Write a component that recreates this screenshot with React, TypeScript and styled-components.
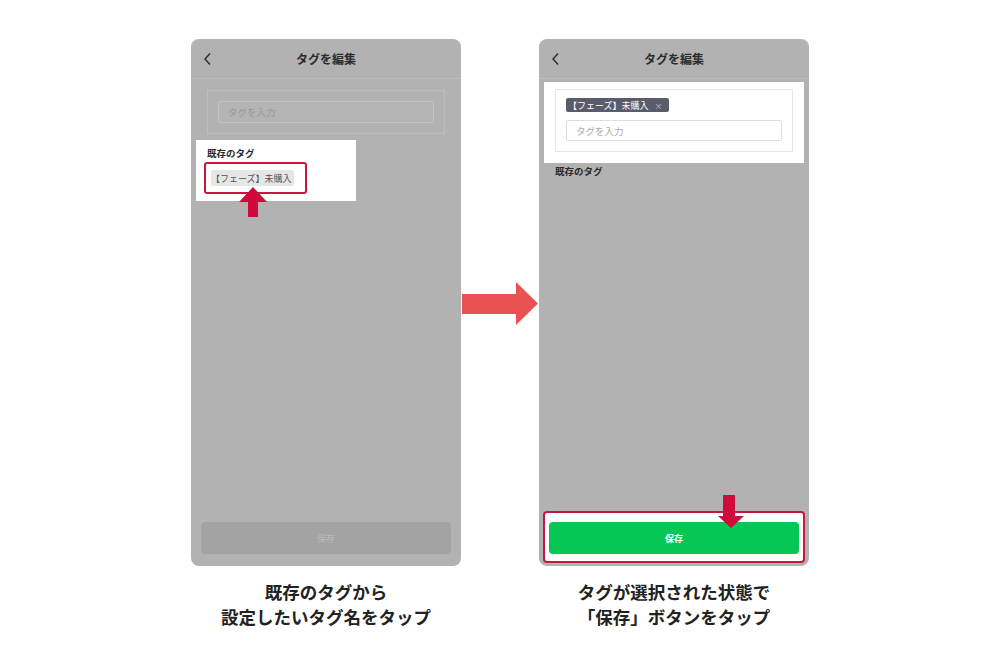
import styled, { createGlobalStyle } from 'styled-components'

const GlobalStyle = createGlobalStyle`
  body {
    margin: 0;
    background: #ffffff;
    font-family: "Noto Sans CJK JP", "Noto Sans", sans-serif;
  }
`

const Page = styled.div`
  width: 1000px;
  height: 667px;
  display: flex;
  justify-content: center;
  padding-top: 39px;
  box-sizing: border-box;
`

const Column = styled.div`
  width: 270px;
  display: flex;
  flex-direction: column;
  align-items: center;
`

const Phone = styled.div`
  position: relative;
  width: 270px;
  height: 527px;
  background: #b2b2b2;
  border-radius: 8px;
  display: flex;
  flex-direction: column;
  overflow: hidden;
`

const Header = styled.div`
  position: relative;
  height: 39px;
  flex-shrink: 0;
  border-bottom: 1px solid #bcbcbc;
  display: flex;
  align-items: center;
  justify-content: center;
  font-size: 12px;
  font-weight: 700;
  color: #2c2c2c;
`

const Back = styled.svg`
  position: absolute;
  left: 12px;
  top: 13px;
`

const Caption = styled.div`
  margin-top: 13px;
  text-align: center;
  font-size: 17.5px;
  line-height: 25px;
  font-weight: 700;
  color: #222;
  white-space: nowrap;
`

const ArrowColumn = styled.div`
  width: 78px;
  display: flex;
  justify-content: center;
  padding-top: 243px;
  box-sizing: border-box;
`

const InputBox = styled.div`
  margin: 11px 16px 0;
  border: 1px solid #bdbdbd;
  padding: 10px;
`

const FakeInput = styled.div<{ $light?: boolean }>`
  height: ${(p) => (p.$light ? 21 : 22)}px;
  box-sizing: border-box;
  border: 1px solid ${(p) => (p.$light ? '#dedede' : '#c2c2c2')};
  border-radius: 2px;
  background: ${(p) => (p.$light ? '#fff' : '#b4b4b4')};
  display: flex;
  align-items: center;
  padding-left: 9px;
  font-size: 9.5px;
  color: ${(p) => (p.$light ? '#aaa' : '#999')};
`

const ExistingSection = styled.div<{ $highlighted?: boolean }>`
  margin: ${(p) => (p.$highlighted ? '6px 0 0 5px' : '0 0 0 5px')};
  width: ${(p) => (p.$highlighted ? '160px' : 'auto')};
  height: ${(p) => (p.$highlighted ? '61px' : 'auto')};
  box-sizing: border-box;
  padding: ${(p) => (p.$highlighted ? '6px 0 0 8px' : '1px 0 0 8px')};
  background: ${(p) => (p.$highlighted ? '#fff' : 'transparent')};
`

const SectionLabel = styled.div`
  padding-left: 3px;
  font-size: 9.5px;
  line-height: 14px;
  font-weight: 700;
  color: #2a2a2a;
`

const RedFrame = styled.div`
  margin-top: 2px;
  width: 103px;
  height: 32px;
  box-sizing: border-box;
  border: 2px solid #c8173f;
  border-radius: 3px;
  padding: 6px 5px;
  display: flex;
  align-items: flex-start;
`

const Chip = styled.div<{ $selected?: boolean }>`
  display: inline-flex;
  align-items: center;
  gap: 6px;
  height: ${(p) => (p.$selected ? 14 : 16)}px;
  padding: 0 ${(p) => (p.$selected ? 6 : 2)}px 0 ${(p) => (p.$selected ? 2 : 0)}px;
  border-radius: 2px;
  background: ${(p) => (p.$selected ? '#5a5c6c' : '#e6e6e6')};
  color: ${(p) => (p.$selected ? '#fff' : '#555')};
  font-size: 9px;
  white-space: nowrap;
`

const ChipClose = styled.span`
  font-size: 8px;
  color: #c8c9d2;
`

const SelectedPanel = styled.div`
  margin: 3px 5px 0;
  height: 81px;
  box-sizing: border-box;
  padding: 7px 11px 11px;
  background: #fff;
`

const TagBox = styled.div`
  border: 1px solid #e6e6e6;
  padding: 8px 10px 10px;
  display: flex;
  flex-direction: column;
  align-items: flex-start;
  gap: 8px;
  & > ${FakeInput} {
    align-self: stretch;
  }
`

const Spacer = styled.div`
  flex: 1;
`

const SaveButton = styled.div<{ $active?: boolean }>`
  height: 32px;
  border-radius: 4px;
  background: ${(p) => (p.$active ? '#06c755' : '#a3a3a3')};
  color: ${(p) => (p.$active ? '#fff' : '#bdbdbd')};
  font-size: 9px;
  font-weight: ${(p) => (p.$active ? 700 : 400)};
  display: flex;
  align-items: center;
  justify-content: center;
`

const DimSave = styled.div`
  margin: 0 10px 12px;
`

const SaveFrame = styled.div`
  margin: 0 4px 3px;
  height: 52px;
  box-sizing: border-box;
  border: 2px solid #c5173f;
  border-radius: 4px;
  background: #fff;
  padding: 9px 4px 7px;
`

const Pointer = styled.svg<{ $left: number; $top: number }>`
  position: absolute;
  left: ${(p) => p.$left}px;
  top: ${(p) => p.$top}px;
`

const TAG = '【フェーズ】未購入'

function PhoneHeader() {
  return (
    <Header>
      <Back width="10" height="14" viewBox="0 0 10 14">
        <path d="M7 1.5 L2 7 L7 12.5" fill="none" stroke="#2c2c2c" strokeWidth="1.4" />
      </Back>
      タグを編集
    </Header>
  )
}

export default function App() {
  return (
    <>
      <GlobalStyle />
      <Page>
        <Column>
          <Phone>
            <PhoneHeader />
            <InputBox>
              <FakeInput>タグを入力</FakeInput>
            </InputBox>
            <ExistingSection $highlighted>
              <SectionLabel>既存のタグ</SectionLabel>
              <RedFrame>
                <Chip>{TAG}</Chip>
              </RedFrame>
            </ExistingSection>
            <Pointer $left={48} $top={148} width="28" height="30" viewBox="0 0 28 30">
              <polygon points="14,0 28,15 19,15 19,30 9,30 9,15 0,15" fill="#d00b3c" />
            </Pointer>
            <Spacer />
            <DimSave>
              <SaveButton>保存</SaveButton>
            </DimSave>
          </Phone>
          <Caption>
            既存のタグから
            <br />
            設定したいタグ名をタップ
          </Caption>
        </Column>

        <ArrowColumn>
          <svg width="76" height="43" viewBox="0 0 76 43">
            <polygon points="0,12 54,12 54,0 76,21.5 54,43 54,32 0,32" fill="#e85250" />
          </svg>
        </ArrowColumn>

        <Column>
          <Phone>
            <PhoneHeader />
            <SelectedPanel>
              <TagBox>
                <Chip $selected>
                  {TAG}
                  <ChipClose>×</ChipClose>
                </Chip>
                <FakeInput $light>タグを入力</FakeInput>
              </TagBox>
            </SelectedPanel>
            <ExistingSection>
              <SectionLabel>既存のタグ</SectionLabel>
            </ExistingSection>
            <Spacer />
            <SaveFrame>
              <SaveButton $active>保存</SaveButton>
            </SaveFrame>
            <Pointer $left={179} $top={456} width="26" height="33" viewBox="0 0 26 33">
              <polygon points="5,0 17,0 17,21 26,21 13,33 0,21 5,21" fill="#d00b3c" />
            </Pointer>
          </Phone>
          <Caption>
            タグが選択された状態で
            <br />
            「保存」ボタンをタップ
          </Caption>
        </Column>
      </Page>
    </>
  )
}
